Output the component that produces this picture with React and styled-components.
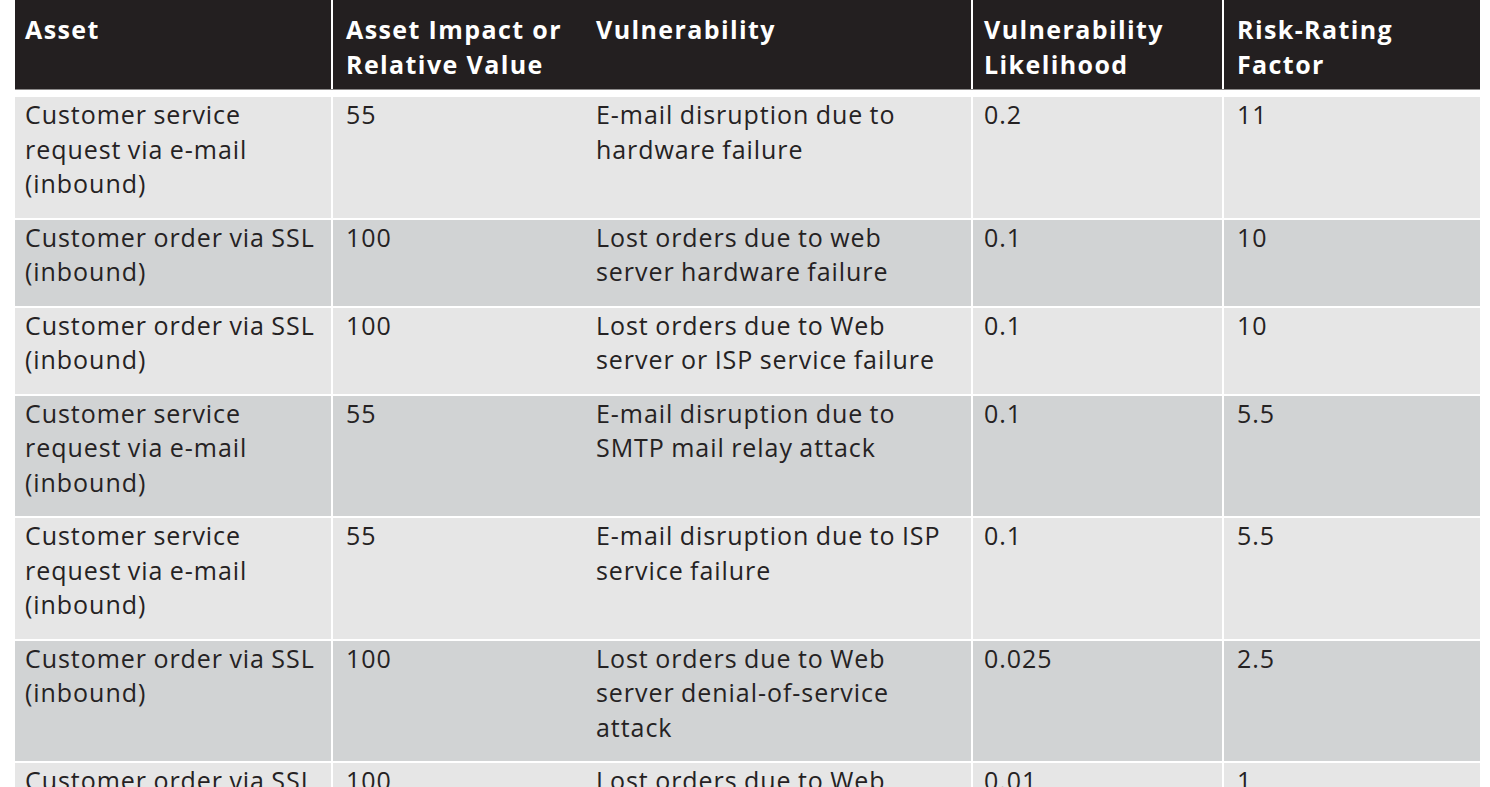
import React from "react";
import styled, { createGlobalStyle } from "styled-components";

const Global = createGlobalStyle`
  html, body { margin: 0; padding: 0; background: #ffffff; }
  body { font-family: "Open Sans", "Noto Sans", sans-serif; overflow: hidden; }
`;

const Page = styled.div`
  padding: 0 10px 0 15px;
  width: 1465px;
`;

const COLS = "318px 252px 388px 251px 256px";
const PADS = [10, 13, 11, 11, 13];

const HeaderRow = styled.div`
  display: grid;
  grid-template-columns: ${COLS};
  background: #231f20;
  border-bottom: 1px solid #8c8a8a;
  margin-bottom: 7px;
`;

const HeadCell = styled.div`
  padding: 12px 6px 7px ${(p) => p.$pad}px;
  color: #ffffff;
  font-weight: 700;
  font-size: 25px;
  line-height: 35px;
  letter-spacing: 1.4px;
  white-space: nowrap;
  overflow: hidden;
  border-right: ${(p) => (p.$divider ? "2px solid #ffffff" : "none")};
`;

const Body = styled.div`
  display: flex;
  flex-direction: column;
  gap: 2px;
`;

const Row = styled.div`
  display: grid;
  grid-template-columns: ${COLS};
  background: ${(p) => (p.$dark ? "#d1d3d4" : "#e6e6e6")};
`;

const Cell = styled.div`
  padding: 0 6px 17px ${(p) => p.$pad}px;
  color: #252223;
  font-size: 25px;
  line-height: 34.5px;
  letter-spacing: 0.95px;
  word-spacing: -1px;
  white-space: nowrap;
  overflow: hidden;
  border-right: ${(p) => (p.$divider ? "2px solid #ffffff" : "none")};
`;

const headers = [
  ["Asset"],
  ["Asset Impact or", "Relative Value"],
  ["Vulnerability"],
  ["Vulnerability", "Likelihood"],
  ["Risk-Rating", "Factor"],
];

const dividers = [true, false, true, true, false];

const emailAsset = ["Customer service", "request via e-mail", "(inbound)"];
const sslAsset = ["Customer order via SSL", "(inbound)"];

const rows = [
  [emailAsset, ["55"], ["E-mail disruption due to", "hardware failure"], ["0.2"], ["11"]],
  [sslAsset, ["100"], ["Lost orders due to web", "server hardware failure"], ["0.1"], ["10"]],
  [sslAsset, ["100"], ["Lost orders due to Web", "server or ISP service failure"], ["0.1"], ["10"]],
  [emailAsset, ["55"], ["E-mail disruption due to", "SMTP mail relay attack"], ["0.1"], ["5.5"]],
  [emailAsset, ["55"], ["E-mail disruption due to ISP", "service failure"], ["0.1"], ["5.5"]],
  [sslAsset, ["100"], ["Lost orders due to Web", "server denial-of-service", "attack"], ["0.025"], ["2.5"]],
  [sslAsset, ["100"], ["Lost orders due to Web", "server failure"], ["0.01"], ["1"]],
];

const Lines = ({ lines }) =>
  lines.map((l, i) => (
    <React.Fragment key={i}>
      {i > 0 && <br />}
      {l}
    </React.Fragment>
  ));

export default function App() {
  return (
    <Page>
      <Global />
      <HeaderRow>
        {headers.map((h, i) => (
          <HeadCell key={i} $pad={PADS[i]} $divider={dividers[i]}>
            <Lines lines={h} />
          </HeadCell>
        ))}
      </HeaderRow>
      <Body>
        {rows.map((r, ri) => (
          <Row key={ri} $dark={ri % 2 === 1}>
            {r.map((c, ci) => (
              <Cell key={ci} $pad={PADS[ci]} $divider={dividers[ci]}>
                <Lines lines={c} />
              </Cell>
            ))}
          </Row>
        ))}
      </Body>
    </Page>
  );
}
